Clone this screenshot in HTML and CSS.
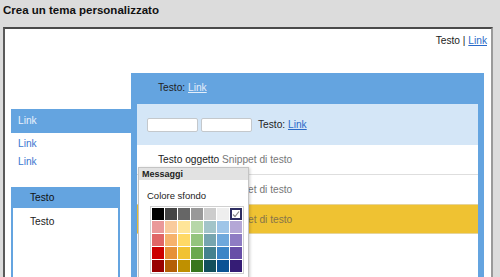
FILE: index.html
```html
<!DOCTYPE html>
<html lang="it">
<head>
  <meta charset="UTF-8">
  <title>Crea un tema personalizzato</title>
  <link rel="stylesheet" href="styles.css">
</head>
<body>

<h1 class="page-title">Crea un tema personalizzato</h1>

<div class="frame">
  <div class="topbar">Testo | <a href="#">Link</a></div>

  <div class="layout">
    <aside class="sidebar">
      <div class="side-active">Link</div>
      <a class="side-link" href="#">Link</a>
      <a class="side-link" href="#">Link</a>
      <div class="side-box">
        <div class="side-box-head">Testo</div>
        <div class="side-box-body">Testo</div>
      </div>
    </aside>

    <section class="panel">
      <div class="panel-head">Testo: <a href="#">Link</a></div>
      <div class="panel-body">
        <div class="toolbar">
          <input type="text" class="field">
          <input type="text" class="field">
          <span class="toolbar-text">Testo: <a href="#">Link</a></span>
        </div>
        <div class="row">Testo oggetto <span class="snippet">Snippet di testo</span></div>
        <div class="row">Testo oggetto <span class="snippet">Snippet di testo</span></div>
        <div class="row row-selected">Testo oggetto <span class="snippet">Snippet di testo</span></div>
      </div>

      <!-- colour picker popup -->
      <div class="popup">
        <div class="popup-head">Messaggi</div>
        <div class="popup-label">Colore sfondo</div>
        <div class="palette">
          <span class="swatch" style="background:#000000"></span>
          <span class="swatch" style="background:#444444"></span>
          <span class="swatch" style="background:#666666"></span>
          <span class="swatch" style="background:#999999"></span>
          <span class="swatch" style="background:#cccccc"></span>
          <span class="swatch" style="background:#eeeeee"></span>
          <span class="swatch swatch-on">
            <svg width="8" height="8" viewBox="0 0 8 8"><path d="M1 4.5 L3 6.5 L7 1.5" fill="none" stroke="#888" stroke-width="1.2"/></svg>
          </span>
          <span class="swatch" style="background:#ea9999"></span>
          <span class="swatch" style="background:#f9cb9c"></span>
          <span class="swatch" style="background:#ffe599"></span>
          <span class="swatch" style="background:#b6d7a8"></span>
          <span class="swatch" style="background:#a2c4c9"></span>
          <span class="swatch" style="background:#9fc5e8"></span>
          <span class="swatch" style="background:#b4a7d6"></span>
          <span class="swatch" style="background:#e06666"></span>
          <span class="swatch" style="background:#f6b26b"></span>
          <span class="swatch" style="background:#ffd966"></span>
          <span class="swatch" style="background:#93c47d"></span>
          <span class="swatch" style="background:#76a5af"></span>
          <span class="swatch" style="background:#6fa8dc"></span>
          <span class="swatch" style="background:#8e7cc3"></span>
          <span class="swatch" style="background:#cc0000"></span>
          <span class="swatch" style="background:#e69138"></span>
          <span class="swatch" style="background:#f1c232"></span>
          <span class="swatch" style="background:#6aa84f"></span>
          <span class="swatch" style="background:#45818e"></span>
          <span class="swatch" style="background:#3d85c6"></span>
          <span class="swatch" style="background:#674ea7"></span>
          <span class="swatch" style="background:#990000"></span>
          <span class="swatch" style="background:#b45f06"></span>
          <span class="swatch" style="background:#bf9000"></span>
          <span class="swatch" style="background:#38761d"></span>
          <span class="swatch" style="background:#134f5c"></span>
          <span class="swatch" style="background:#0b5394"></span>
          <span class="swatch" style="background:#351c75"></span>
        </div>
      </div>
    </section>
  </div>
</div>

</body>
</html>
```

FILE: styles.css
```css
html, body {
  margin: 0;
  height: 277px;
  overflow: hidden;
}
body {
  font-family: "Liberation Sans", Arial, sans-serif;
  font-size: 10.2px;
  color: #222;
  background-color: #dcdcdc;
}
a {
  color: #2a6ac8;
}
.page-title {
  margin: 0;
  padding: 3px 0 0 3px;
  height: 24px;
  font-size: 11.5px;
  line-height: 14px;
  font-weight: bold;
  color: #111;
}
.frame {
  margin-left: 3px;
  width: 486px;
  height: 260px;
  background-color: #fff;
  border-top: 2px solid #4a4a4a;
  border-left: 2px solid #5a5a5a;
  border-right: 2px solid #9a9a9a;
  overflow: hidden;
}
.topbar {
  height: 44px;
  box-sizing: border-box;
  padding: 5px 4px 0 0;
  line-height: 14px;
  text-align: right;
}
.layout {
  display: flex;
  align-items: flex-start;
}
.sidebar {
  width: 120px;
  margin-left: 6px;
  margin-top: 36px;
  display: flex;
  flex-direction: column;
}
.side-active {
  height: 24px;
  line-height: 24px;
  padding-left: 7px;
  background-color: #64a4e0;
  color: #eaf2fc;
}
.side-link {
  display: block;
  padding-left: 7px;
  line-height: 18px;
  text-decoration: none;
  color: #3c78d0;
}
.side-link:first-of-type {
  margin-top: 2px;
}
.side-box {
  margin-top: 16px;
  width: 109px;
  height: 100px;
  box-sizing: border-box;
  border: 2px solid #64a4e0;
  border-top: none;
}
.side-box-head {
  height: 21px;
  line-height: 21px;
  padding-left: 17px;
  background-color: #64a4e0;
  color: #111;
}
.side-box-body {
  padding: 7px 0 0 17px;
  line-height: 14px;
}
.panel {
  position: relative;
  width: 353px;
  height: 220px;
  box-sizing: border-box;
  padding: 0 6px;
  background-color: #64a4e0;
}
.panel-head {
  height: 31px;
  line-height: 29px;
  padding-left: 21px;
}
.panel-head a {
  color: #e4eefa;
}
.panel-body {
  height: 189px;
  background-color: #fff;
}
.toolbar {
  height: 41px;
  display: flex;
  align-items: center;
  gap: 3px;
  padding-left: 10px;
  background-color: #d4e6f7;
}
.field {
  width: 51px;
  height: 14px;
  box-sizing: border-box;
  margin: 0;
  padding: 0;
  border: 1px solid #c4c8cc;
  border-radius: 2px;
  background-color: #fff;
}
.toolbar-text {
  margin-left: 3px;
}
.row {
  height: 29px;
  line-height: 29px;
  padding-left: 21px;
  border-bottom: 1px solid #dedede;
}
.row .snippet {
  color: #777;
}
.row-selected {
  height: 28px;
  background-color: #efc232;
  border-top: 1px solid #e6d49a;
  border-bottom: 1px solid #e6d49a;
  margin-top: -1px;
}
.row-selected .snippet {
  color: #86744a;
}
.popup {
  position: absolute;
  left: 7px;
  top: 94px;
  width: 111px;
  height: 130px;
  box-sizing: border-box;
  background-color: #fff;
  border: 1px solid #c4c4c4;
  box-shadow: 1px 1px 3px rgba(0, 0, 0, 0.2);
}
.popup-head {
  height: 12px;
  line-height: 12px;
  padding-left: 3px;
  background-color: #e2e2e2;
  font-size: 9px;
  font-weight: bold;
}
.popup-label {
  padding: 10px 0 0 8px;
  line-height: 12px;
  font-size: 9.5px;
}
.palette {
  display: grid;
  grid-template-columns: repeat(7, 12px);
  grid-auto-rows: 12px;
  gap: 1px;
  width: max-content;
  margin: 4px 0 0 11px;
  padding: 1px;
  border: 1px solid #d0d0d0;
  background-color: #fff;
}
.swatch {
  display: block;
}
.swatch-on {
  box-sizing: border-box;
  border: 2px solid #2e2e62;
  background-color: #fff;
  display: flex;
  align-items: center;
  justify-content: center;
}
```
